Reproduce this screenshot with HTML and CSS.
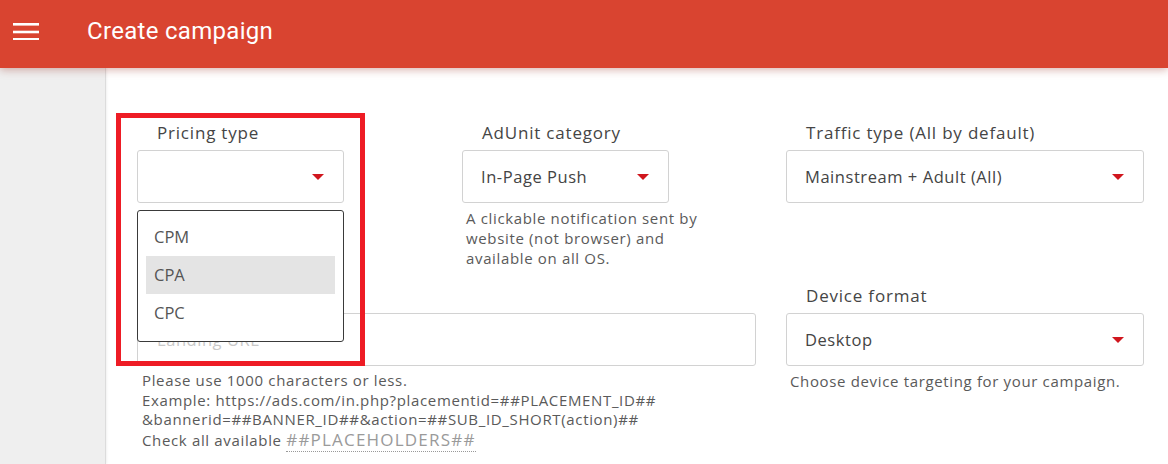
FILE: index.html
```html
<!DOCTYPE html>
<html lang="en">
<head>
<meta charset="utf-8">
<title>Create campaign</title>
<link rel="stylesheet" href="styles.css">
</head>
<body>
<header class="topbar">
  <button class="menu-btn" aria-label="Menu">
    <svg width="26" height="18" viewBox="0 0 26 18"><rect x="0" y="1" width="26" height="2.6" fill="#fff"/><rect x="0" y="8.7" width="26" height="2.6" fill="#fff"/><rect x="0" y="16" width="26" height="2.6" fill="#fff"/></svg>
  </button>
  <h1 class="title">Create campaign</h1>
</header>
<div class="layout">
  <aside class="sidebar"></aside>
  <main class="content">
    <div class="form-grid">
      <div class="field">
        <div class="label">Pricing type</div>
        <div class="select-wrap">
          <div class="select"><span class="value"></span><span class="arrow"></span></div>
          <ul class="dropdown">
            <li class="option">CPM</li>
            <li class="option active">CPA</li>
            <li class="option">CPC</li>
          </ul>
        </div>
      </div>
      <div class="field">
        <div class="label">AdUnit category</div>
        <div class="select"><span class="value">In-Page Push</span><span class="arrow"></span></div>
        <p class="help narrow">A clickable notification sent by website (not browser) and available on all OS.</p>
      </div>
      <div class="field">
        <div class="label">Traffic type (All by default)</div>
        <div class="select wide"><span class="value">Mainstream + Adult (All)</span><span class="arrow"></span></div>
      </div>
      <div class="field span2">
        <div class="label label-spacer" aria-label="Landing URL"></div>
        <div class="input"><span class="placeholder">Landing URL</span></div>
        <p class="help url-help">Please use 1000 characters or less.<br>Example: https://ads.com/in.php?placementid=##PLACEMENT_ID##<br>&amp;bannerid=##BANNER_ID##&amp;action=##SUB_ID_SHORT(action)##<br>Check all available <span class="ph-link">##PLACEHOLDERS##</span></p>
      </div>
      <div class="field">
        <div class="label">Device format</div>
        <div class="select wide"><span class="value">Desktop</span><span class="arrow"></span></div>
        <p class="help">Choose device targeting for your campaign.</p>
      </div>
    </div>
    <div class="highlight"></div>
  </main>
</div>
</body>
</html>
```
FILE: styles.css
```css
* { box-sizing: border-box; }
html, body { margin: 0; padding: 0; }
body {
  width: 1168px;
  height: 464px;
  overflow: hidden;
  font-family: "Open Sans", Lato, sans-serif;
  color: #4a4a4a;
  background: #fff;
}
.topbar {
  position: relative;
  z-index: 2;
  height: 68px;
  padding-bottom: 7px;
  background: #d94430;
  display: flex;
  align-items: center;
  box-shadow: 0 2px 8px rgba(150, 40, 30, 0.35);
}
.menu-btn {
  width: 26px;
  height: 18px;
  margin-left: 13px;
  padding: 0;
  border: 0;
  background: none;
  display: flex;
}
.title {
  margin: 0 0 0 48px;
  font-family: Roboto, sans-serif;
  font-weight: 400;
  font-size: 24px;
  color: #fff;
  letter-spacing: 0.3px;
}
.layout {
  display: flex;
  height: 396px;
}
.sidebar {
  width: 106px;
  flex: none;
  background: #efefef;
  border-right: 1px solid #dcdcdc;
  box-shadow: 1px 0 2px rgba(0,0,0,0.06);
}
.content {
  position: relative;
  flex: 1;
  padding: 54px 0 0 31px;
}
.form-grid {
  display: grid;
  grid-template-columns: 295px 294px 358px;
  grid-template-rows: 145px auto;
  column-gap: 30px;
  row-gap: 18px;
  align-items: start;
}
.field { position: relative; }
.span2 { grid-column: 1 / span 2; }
.label {
  font-size: 17px;
  letter-spacing: 0.8px;
  line-height: 22px;
  margin-bottom: 6px;
  padding-left: 20px;
  color: #454545;
}
.label-spacer { height: 22px; }
.select-wrap { position: relative; width: 207px; }
.select {
  width: 207px;
  height: 53px;
  border: 1px solid #d2d2d2;
  border-radius: 3px;
  padding: 0 19px 0 18px;
  display: flex;
  align-items: center;
  justify-content: space-between;
  font-size: 16.5px;
  letter-spacing: 0.55px;
  color: #444;
}
.select.wide { width: 358px; }
.arrow {
  width: 0;
  height: 0;
  border-left: 6.5px solid transparent;
  border-right: 6.5px solid transparent;
  border-top: 6px solid #d0161e;
  margin-top: 1px;
}
.input {
  height: 53px;
  border: 1px solid #d2d2d2;
  border-radius: 3px;
  padding: 0 19px;
  display: flex;
  align-items: center;
  font-size: 16.5px;
  letter-spacing: 0.55px;
}
.placeholder { color: #c9c9c9; }
.help {
  margin: 5px 0 0 4px;
  font-size: 15px;
  letter-spacing: 0.65px;
  line-height: 20px;
  color: #5a5a5a;
}
.help.narrow { width: 238px; }
.url-help { line-height: 19.5px; margin-left: 5px; }
.ph-link {
  font-size: 17px;
  letter-spacing: 1.2px;
  color: #9a9a9a;
  border-bottom: 1px dotted #999;
}
.dropdown {
  position: absolute;
  z-index: 3;
  top: 60px;
  left: 0;
  width: 207px;
  height: 132px;
  margin: 0;
  padding: 7px 8px 8px;
  list-style: none;
  background: #fff;
  border: 1px solid #3a3a3a;
  border-radius: 3px;
}
.option {
  height: 38px;
  line-height: 38px;
  padding-left: 8px;
  font-size: 16.5px;
  color: #555;
}
.option.active { background: #e4e4e4; }
.highlight {
  position: absolute;
  z-index: 4;
  left: 10px;
  top: 45px;
  width: 249px;
  height: 253px;
  border: 5px solid #ee1c25;
  pointer-events: none;
}
```
